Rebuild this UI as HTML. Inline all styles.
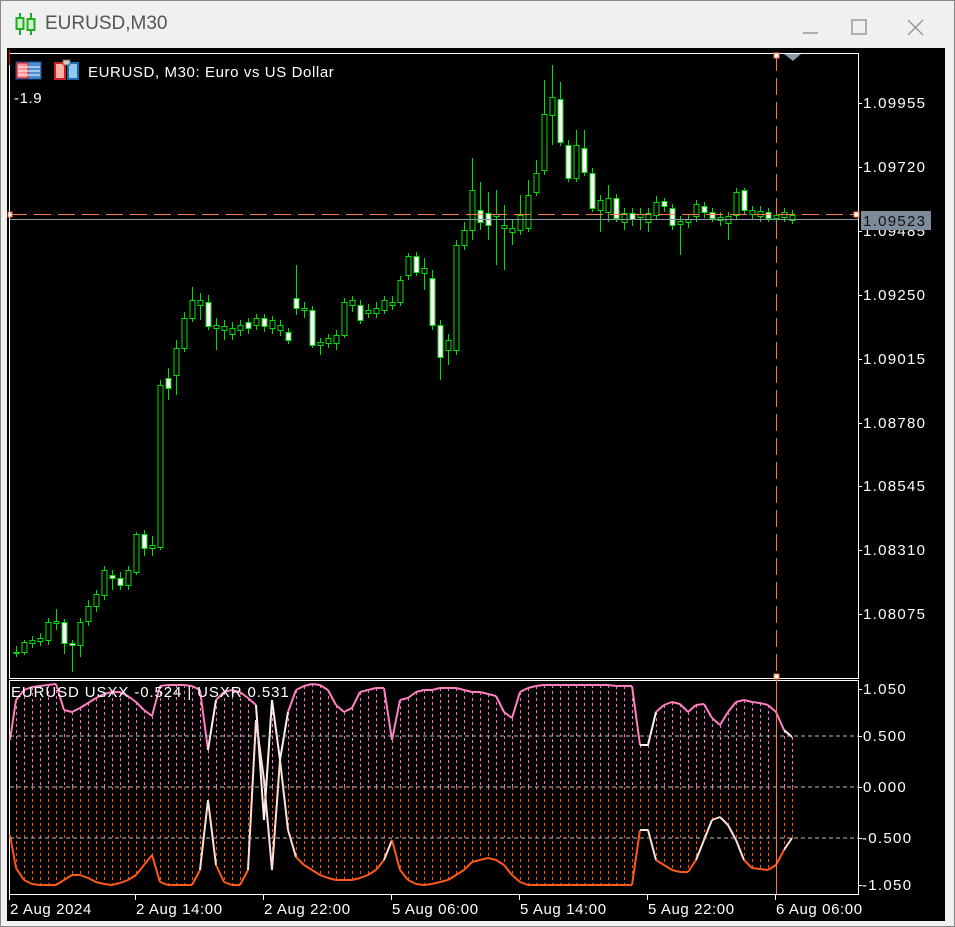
<!DOCTYPE html>
<html><head><meta charset="utf-8"><style>
html,body{margin:0;padding:0;width:955px;height:927px;overflow:hidden;background:#f0f0f0;font-family:"Liberation Sans",sans-serif}
#t{position:absolute;left:45px;top:13px;font-size:19px;color:#555}
svg{position:absolute;left:0;top:0}
</style></head><body>
<div style="position:absolute;left:0;top:0;width:953px;height:925px;border:1px solid #888"></div>
<div id="t">EURUSD,M30</div>
<svg width="955" height="927" id="s" font-family="Liberation Sans, sans-serif">
<g stroke="#22aa22" stroke-width="2" fill="#c8f5c8"><line x1="20" y1="13" x2="20" y2="35"/><rect x="16.5" y="18" width="7" height="11"/><line x1="31" y1="13" x2="31" y2="35"/><rect x="27.5" y="19" width="7" height="11"/></g>
<g stroke="#999" stroke-width="1.5" fill="none"><line x1="803" y1="33" x2="818" y2="33"/><rect x="852" y="20" width="14" height="14"/><line x1="908" y1="20" x2="923" y2="35"/><line x1="923" y1="20" x2="908" y2="35"/></g>
<rect x="7" y="48" width="938" height="873" fill="#000"/>
<rect x="9.5" y="53.5" width="849" height="625" fill="none" stroke="#fff"/>
<rect x="9.5" y="680.5" width="849" height="214" fill="none" stroke="#fff"/>
<rect x="9" y="50" width="1" height="15" fill="#f00"/>
<g id="cd"></g><g id="ind"></g>
<g stroke="#bbb" stroke-dasharray="4,3"><line x1="10" y1="736" x2="858" y2="736"/><line x1="10" y1="787" x2="858" y2="787"/><line x1="10" y1="838" x2="858" y2="838"/></g>
<line x1="10" y1="214.5" x2="858" y2="214.5" stroke="#ff7744" stroke-dasharray="17,7"/>
<line x1="10" y1="219.5" x2="858" y2="219.5" stroke="#8a9aa8"/>
<line x1="776.5" y1="54" x2="776.5" y2="678" stroke="#ff7744" stroke-dasharray="17,7"/>
<line x1="776.5" y1="680" x2="776.5" y2="894" stroke="#ff7744"/>
<rect x="774" y="53" width="5" height="5" fill="#fff" stroke="#ff7744"/>
<rect x="774" y="674" width="5" height="5" fill="#fff" stroke="#ff7744"/>
<rect x="854" y="212" width="5" height="5" fill="#fff" stroke="#ff7744"/>
<rect x="8" y="212" width="4" height="5" fill="#fff" stroke="#ff7744"/>
<polygon points="784,54 801,54 793,61" fill="#8a9aa8"/>
<g fill="#fff" font-size="15" letter-spacing="0.6"><text x="88" y="77">EURUSD, M30:  Euro vs US Dollar</text><text x="14" y="103">-1.9</text>
<text x="11" y="697" letter-spacing="0.9">EURUSD USXX -0.524 | USXR 0.531</text></g>
<g><rect x="16" y="62" width="25" height="17" fill="#4a8fd0" stroke="#1a5aa0"/><rect x="17" y="63" width="11" height="15" fill="#ff9090" stroke="#d02020"/><g stroke="#fff"><line x1="18" y1="67" x2="40" y2="67"/><line x1="18" y1="71" x2="40" y2="71"/><line x1="18" y1="75" x2="40" y2="75"/></g>
<rect x="55" y="63" width="10" height="16" fill="#ffb0a0" stroke="#d02020" stroke-width="2"/><rect x="68" y="63" width="10" height="16" fill="#90c8f0" stroke="#1a6ab0" stroke-width="2"/><rect x="63" y="60" width="7" height="5" fill="#ccc" stroke="#666"/></g>
<g fill="#fff" font-size="15" id="ax"></g>
<rect x="861" y="211" width="70" height="19" fill="#7d8c9b"/>
<text x="863" y="226" font-size="15" letter-spacing="1.3" fill="#111">1.09523</text>
</svg>
<script>
var ns="http://www.w3.org/2000/svg";
function el(p,t,a,txt){var e=document.createElementNS(ns,t);for(var k in a)e.setAttribute(k,a[k]);if(txt)e.textContent=txt;document.getElementById(p).appendChild(e);return e;}
var C=[[16,652,653,646,657,0],[24,642,652,640,655,0],[32,640,643,636,648,0],[40,638,641,633,646,0],[48,622,640,618,645,0],[56,621,623,609,630,0],[64,622,643,619,654,1],[72,643,645,640,672,1],[80,622,645,618,657,0],[88,606,621,600,626,0],[96,594,606,590,612,0],[104,570,595,566,600,0],[112,575,578,570,590,1],[120,578,585,572,590,1],[128,570,585,566,590,0],[136,534,572,532,575,0],[144,534,548,530,556,1],[152,545,548,536,556,0],[160,385,547,380,550,0],[168,378,388,368,400,1],[176,348,375,340,395,0],[184,318,348,312,352,0],[192,300,318,287,322,0],[200,300,305,293,320,0],[208,302,326,295,330,1],[216,325,328,318,350,0],[224,326,330,320,340,0],[232,328,334,322,340,0],[240,325,330,320,336,0],[248,322,328,318,334,1],[256,318,325,314,330,0],[264,318,326,314,332,1],[272,320,328,316,334,0],[280,325,330,320,336,0],[288,332,340,328,344,1],[296,298,308,265,315,1],[304,308,310,302,318,0],[312,310,345,306,348,1],[320,342,345,338,355,0],[328,338,343,334,348,0],[336,335,343,330,350,0],[344,302,335,298,338,0],[352,300,305,296,312,0],[360,305,320,300,324,1],[368,310,313,304,318,0],[376,308,313,302,318,0],[384,300,310,296,314,0],[392,302,305,296,310,0],[400,280,302,276,306,0],[408,256,275,253,280,0],[416,256,272,252,276,1],[424,268,273,258,290,0],[432,278,325,270,330,1],[440,325,357,320,380,1],[448,340,350,334,365,0],[456,245,350,240,355,0],[464,230,245,222,250,0],[472,190,230,158,240,0],[480,210,222,182,230,1],[488,213,225,192,240,1],[496,214,216,190,265,0],[504,225,228,205,270,0],[512,228,232,220,245,0],[520,215,230,195,235,0],[528,195,228,180,232,0],[536,173,192,160,196,0],[544,114,170,80,175,0],[552,97,115,65,145,0],[560,99,142,82,146,1],[568,145,178,140,182,1],[576,145,178,130,182,0],[584,148,172,130,176,1],[592,173,208,168,212,1],[600,200,210,195,232,0],[608,198,212,185,222,0],[616,198,218,194,222,1],[624,213,222,208,230,0],[632,213,219,208,226,1],[640,214,217,208,230,0],[648,213,222,208,232,0],[656,202,215,196,220,0],[664,201,206,198,212,1],[672,208,225,204,230,1],[680,221,224,216,255,0],[688,219,222,214,228,0],[696,204,216,200,222,0],[704,206,212,202,218,1],[712,212,218,208,222,1],[720,217,220,212,226,0],[728,216,223,212,240,0],[736,192,215,188,220,0],[744,190,210,188,214,1],[752,210,214,206,220,0],[760,211,216,206,222,0],[768,212,218,208,222,1],[776,215,218,210,222,0],[784,212,217,208,222,0],[792,215,220,210,224,0]];
C.forEach(function(c){el("cd","line",{x1:c[0]+.5,y1:c[3],x2:c[0]+.5,y2:c[4],stroke:"#00e000"});el("cd","rect",{x:c[0]-2,y:c[1]+.5,width:5,height:Math.max(1,c[2]-c[1]),fill:c[5]?"#fff":"#000",stroke:"#00e000"});});
var A=[700,690,687,686,685,684,710,712,708,703,698,694,692,692,696,702,710,716,686,685,685,685,686,690,750,700,692,690,692,698,705,820,700,760,712,690,686,684,685,690,705,712,708,692,690,688,688,740,700,698,692,690,690,688,688,688,690,692,692,694,696,712,718,692,688,686,685,685,685,685,685,685,685,685,685,686,686,686,745,745,712,705,702,704,712,705,704,718,725,712,702,700,702,703,705,712,730,737];
var B=[868,880,884,885,885,885,880,875,875,878,882,884,885,883,880,875,865,855,882,885,885,885,885,870,800,865,882,885,885,870,720,780,870,760,830,857,865,870,875,878,880,880,880,878,875,870,860,840,870,880,884,885,884,882,880,875,870,862,860,858,860,865,875,882,885,885,885,885,885,885,885,885,885,885,885,885,885,885,830,830,860,865,870,872,872,860,840,820,817,825,840,860,868,869,870,865,850,838];
for(var i=0;i<A.length;i++){var x=16+8*i+.5,a=A[i],b=B[i];var lo=Math.min(a,b),hi=Math.max(a,b);
 if(lo<787)el("ind","line",{x1:x,y1:lo,x2:x,y2:Math.min(hi,787),stroke:"#ff70b8","stroke-dasharray":"3,3"});
 if(hi>787)el("ind","line",{x1:x,y1:Math.max(lo,787),x2:x,y2:hi,stroke:"#ff5010","stroke-dasharray":"3,3"});}
el("ind","line",{x1:10,y1:740,x2:16,y2:700,stroke:"#ff80c0","stroke-width":2});
el("ind","line",{x1:10,y1:835,x2:16,y2:868,stroke:"#ff5010","stroke-width":2});
for(var i=0;i<A.length-1;i++){var x1=16+8*i,x2=x1+8;
 var ma=(A[i]+A[i+1])/2,mb=(B[i]+B[i+1])/2;
 el("ind","line",{x1:x1,y1:A[i],x2:x2,y2:A[i+1],stroke:ma<725?"#ff80c0":"#fff0f0","stroke-width":2});
 el("ind","line",{x1:x1,y1:B[i],x2:x2,y2:B[i+1],stroke:mb>850?"#ff5a1a":"#ffe0d8","stroke-width":2});}
var P=[["1.09955",103],["1.09720",167],["1.09485",231],["1.09250",295],["1.09015",359],["1.08780",423],["1.08545",486],["1.08310",550],["1.08075",614],["1.050",689],["0.500",736],["0.000",787],["-0.500",838],["-1.050",885]];
P.forEach(function(p){el("ax","text",{x:p[0][0]=="-"?862:863,y:p[1]+5,"letter-spacing":"1.3"},p[0]);el("ax","rect",{x:858,y:p[1],width:4,height:1});});
[["2 Aug 2024",10],["2 Aug 14:00",136],["2 Aug 22:00",264],["5 Aug 06:00",392],["5 Aug 14:00",520],["5 Aug 22:00",648],["6 Aug 06:00",776]].forEach(function(t){el("ax","text",{x:t[1],y:914,"letter-spacing":"0.6"},t[0]);el("ax","rect",{x:t[1]-1,y:895,width:1,height:5});});
</script>
</body></html>
